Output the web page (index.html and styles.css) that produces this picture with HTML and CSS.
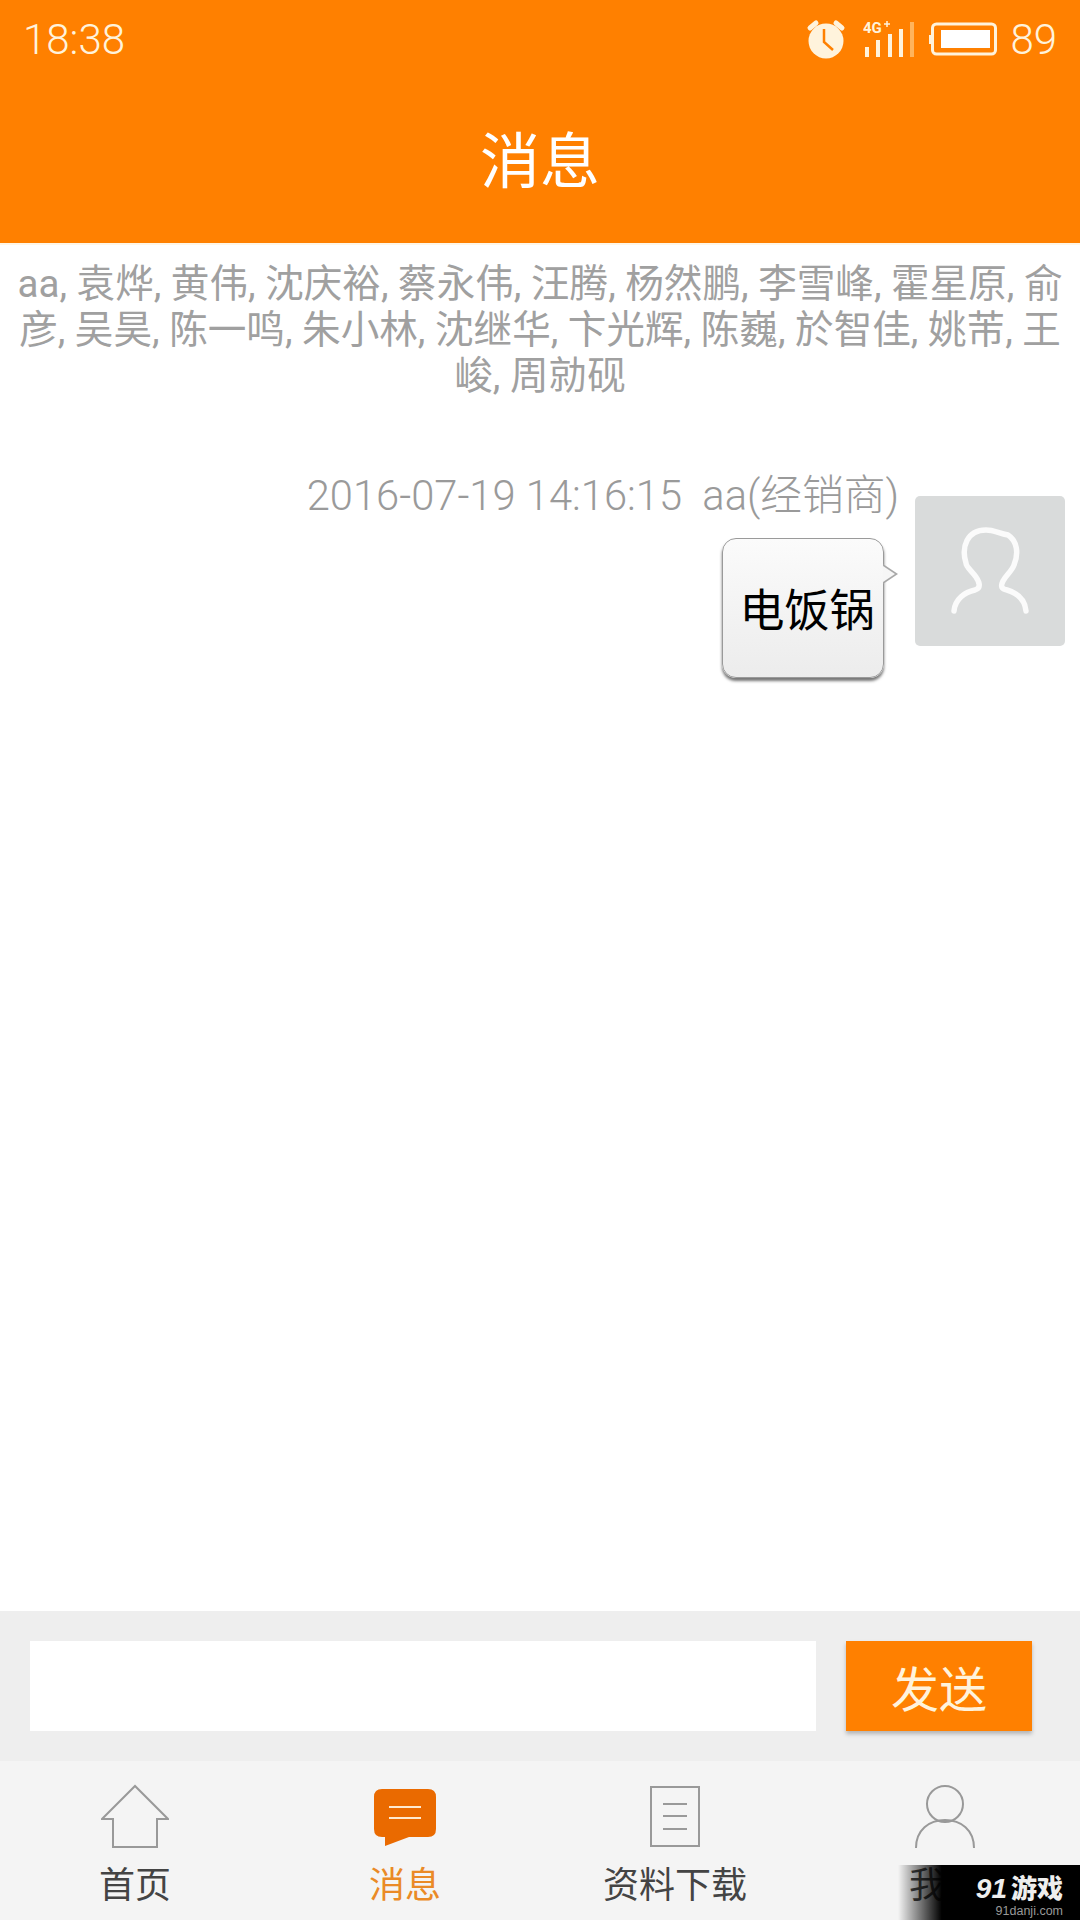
FILE: index.html
```html
<!DOCTYPE html>
<html lang="zh">
<head>
  <meta charset="utf-8">
  <title>消息</title>
  <link rel="stylesheet" href="styles.css">
</head>
<body>
  <div class="app">
    <header class="top">
      <div class="status">
        <span class="time">18:38</span>
        <div class="status-right">
          <svg class="ic-alarm" width="40" height="40" viewBox="0 0 40 40">
            <path d="M4 9 L10 4 M36 9 L30 4" stroke="#fff3dc" stroke-width="5" stroke-linecap="round"/>
            <circle cx="20" cy="22" r="17.500" fill="#fff3dc"/>
            <path d="M18 10 V23 L27 31" fill="none" stroke="#ff8000" stroke-width="2.500"/>
          </svg>
          <svg class="ic-signal" width="52" height="38" viewBox="0 0 52 38">
            <text x="0" y="13" class="sig-text">4G</text>
            <path d="M21 4 H27 M24 1 V7" stroke="#fff3dc" stroke-width="1.500"/>
            <rect x="2" y="27" width="4" height="10" fill="#fff3dc"/>
            <rect x="13" y="20" width="4" height="17" fill="#fff3dc"/>
            <rect x="25" y="14" width="4" height="23" fill="#fff3dc"/>
            <rect x="36" y="9" width="4" height="28" fill="#fff3dc"/>
            <rect x="47" y="2" width="4" height="35" fill="#ffb45c"/>
          </svg>
          <svg class="ic-battery" width="68" height="34" viewBox="0 0 68 34">
            <rect x="3.500" y="2" width="63" height="30" rx="4" fill="none" stroke="#fff3dc" stroke-width="3"/>
            <rect x="0" y="13" width="2" height="9" fill="#fff3dc"/>
            <rect x="12" y="8" width="49" height="18" fill="#fff"/>
          </svg>
          <span class="level">89</span>
        </div>
      </div>
      <h1 class="title">消息</h1>
    </header>

    <main class="chat">
      <p class="members">aa, 袁烨, 黄伟, 沈庆裕, 蔡永伟, 汪腾, 杨然鹏, 李雪峰, 霍星原, 俞彦, 吴昊, 陈一鸣, 朱小林, 沈继华, 卞光辉, 陈巍, 於智佳, 姚芾, 王峻, 周勍砚</p>

      <div class="msg">
        <div class="msg-body">
          <div class="msg-meta">2016-07-19 14:16:15&nbsp;&nbsp;aa(经销商)</div>
          <div class="bubble">电饭锅</div>
        </div>
        <div class="avatar">
          <svg width="84" height="88" viewBox="0 0 84 88">
            <path d="M6 84 C7 72 17 65 27 63 C33 61 32 56 28 50 C24 44 18 40 18 36 C13 20 19 3 38 3 C46 3 50 6 60 8 C69 14 71 26 66 38 C64 44 58 48 55 54 C52 60 54 62 59 63 C69 66 77 72 78 84" fill="none" stroke="#fbfbfb" stroke-width="5.500" stroke-linecap="round" stroke-linejoin="round"/>
          </svg>
        </div>
      </div>
    </main>

    <div class="composer">
      <div class="composer-input"></div>
      <button class="send" type="button">发送</button>
    </div>

    <nav class="tabs">
      <div class="tab">
        <svg class="tab-ic" width="68" height="64" viewBox="0 0 68 64">
          <path d="M1 35 L34 2 L67 35 H56 V63 H12 V35 Z" fill="none" stroke="#999" stroke-width="2"/>
        </svg>
        <span>首页</span>
      </div>
      <div class="tab tab-on">
        <svg class="tab-ic" width="64" height="64" viewBox="0 0 64 64">
          <path d="M9 5 H55 Q63 5 63 13 V45 Q63 53 55 53 H36 L12 62 V53 H9 Q1 53 1 45 V13 Q1 5 9 5 Z" fill="#ea6a00"/>
          <path d="M16 23 H48 M16 34 H48" stroke="#ffe9cf" stroke-width="2"/>
        </svg>
        <span>消息</span>
      </div>
      <div class="tab">
        <svg class="tab-ic" width="52" height="64" viewBox="0 0 52 64">
          <rect x="2" y="3" width="48" height="59" fill="none" stroke="#999" stroke-width="2"/>
          <path d="M14 20 H38 M14 32 H38 M14 45 H38" stroke="#999" stroke-width="2"/>
        </svg>
        <span>资料下载</span>
      </div>
      <div class="tab">
        <svg class="tab-ic" width="64" height="64" viewBox="0 0 64 64">
          <circle cx="32" cy="20" r="18" fill="none" stroke="#999" stroke-width="2"/>
          <path d="M3 64 C3 46 16 36 32 36 C48 36 61 46 61 64" fill="none" stroke="#999" stroke-width="2"/>
        </svg>
        <span>我的</span>
      </div>
    </nav>

    <div class="mark">
      <div class="mark-logo"><span class="mark-num">91</span>游戏</div>
      <div class="mark-url">91danji.com</div>
    </div>
  </div>
</body>
</html>
```

FILE: styles.css
```css
* {
  box-sizing: border-box;
}

body {
  margin: 0;
  background: #fff;
  font-family: Roboto, "Noto Sans CJK SC", sans-serif;
}

.app {
  position: relative;
  width: 1080px;
  height: 1920px;
  display: flex;
  flex-direction: column;
  overflow: hidden;
}

/* header */
.top {
  height: 245px;
  background: #ff8000;
  border-bottom: 2px solid #fff6e6;
  color: #fff;
}

.status {
  height: 78px;
  padding: 0 23px;
  display: flex;
  justify-content: space-between;
  align-items: center;
  color: #fff3dc;
  font-size: 42px;
  font-weight: 300;
}

.status-right {
  display: flex;
  align-items: center;
}

.ic-alarm {
  margin-right: 17px;
}

.ic-signal {
  margin-right: 14px;
}

.ic-battery {
  margin-right: 13px;
}

.sig-text {
  font-size: 15px;
  font-weight: 700;
  fill: #fff3dc;
}

.title {
  margin: 0;
  height: 165px;
  padding-bottom: 8px;
  display: flex;
  align-items: center;
  justify-content: center;
  font-size: 60px;
  font-weight: 400;
}

/* chat */
.chat {
  flex: 1;
}

.members {
  margin: 16px 0 0;
  padding: 0 12px;
  text-align: center;
  color: #a0a0a0;
  font-size: 38.600px;
  font-weight: 400;
  line-height: 46px;
}

.msg {
  margin-top: 73px;
  padding-right: 15px;
  display: flex;
  justify-content: flex-end;
}

.msg-body {
  display: flex;
  flex-direction: column;
  align-items: flex-end;
  margin-right: 16px;
}

.msg-meta {
  height: 48px;
  line-height: 48px;
  color: #9a9a9a;
  font-size: 41.700px;
  font-weight: 300;
  white-space: nowrap;
}

.bubble {
  position: relative;
  margin-top: 18px;
  margin-right: 15px;
  width: 162px;
  height: 140px;
  padding-left: 8px;
  padding-bottom: 2px;
  display: flex;
  align-items: center;
  justify-content: center;
  border: 1px solid #9a9a9a;
  border-radius: 14px;
  background: linear-gradient(#fbfbfb, #ececec);
  box-shadow: 0 3px 3px #777;
  color: #000;
  font-size: 45px;
  white-space: nowrap;
}

/* tail: grey edge with the fill on top */
.bubble::before,
.bubble::after {
  content: "";
  position: absolute;
  border-style: solid;
  border-color: transparent;
}

.bubble::before {
  top: 25px;
  right: -15px;
  border-width: 10px 0 10px 15px;
  border-left-color: #a8a8a8;
}

.bubble::after {
  top: 27px;
  right: -12px;
  border-width: 8px 0 8px 12px;
  border-left-color: #f6f6f6;
}

.avatar {
  width: 150px;
  height: 150px;
  margin-top: 24px;
  border-radius: 5px;
  background: #d9dbdb;
  display: flex;
  align-items: center;
  justify-content: center;
}

/* input bar */
.composer {
  height: 150px;
  padding: 30px 48px 30px 30px;
  background: #eee;
  display: flex;
}

.composer-input {
  width: 786px;
  height: 90px;
  background: #fff;
}

.send {
  margin-left: 30px;
  width: 186px;
  height: 90px;
  border: 0;
  padding: 0;
  background: #ff8000;
  box-shadow: 0 3px 4px #b5b5b5;
  color: #fff3dc;
  font-family: inherit;
  font-size: 48px;
  font-weight: 400;
}

/* bottom tabs */
.tabs {
  height: 159px;
  background: #f4f4f4;
  display: grid;
  grid-template-columns: repeat(4, 1fr);
}

.tab {
  padding-top: 23px;
  display: flex;
  flex-direction: column;
  align-items: center;
  color: #444;
  font-size: 36px;
  font-weight: 400;
  line-height: 50px;
}

.tab-ic {
  height: 64px;
  margin-bottom: 13px;
}

.tab-on {
  color: #ea8a26;
}

/* watermark over the corner */
.mark {
  position: absolute;
  right: 0;
  bottom: 0;
  width: 182px;
  height: 55px;
  padding: 7px 17px 0 0;
  background: linear-gradient(90deg, rgba(0, 0, 0, 0), #000 24%);
  text-align: right;
}

.mark-logo {
  color: #eee;
  font-family: "Noto Sans CJK SC", sans-serif;
  font-size: 26px;
  font-weight: 900;
  line-height: 30px;
}

.mark-num {
  margin-right: 4px;
  font-family: "Liberation Sans", sans-serif;
  font-size: 28px;
  font-style: italic;
  font-weight: 700;
}

.mark-url {
  color: #999;
  font-family: "Liberation Sans", sans-serif;
  font-size: 12.500px;
  line-height: 14px;
}
```
